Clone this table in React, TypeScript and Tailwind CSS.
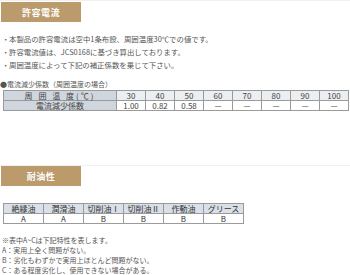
import React from 'react';

const jp = "font-['Noto_Sans_CJK_JP','Noto_Sans',sans-serif]";

// Current derating by ambient temperature
const temps = ['30', '40', '50', '60', '70', '80', '90', '100'];
const factors = ['1.00', '0.82', '0.58', '—', '—', '—', '—', '—'];

// Oil resistance grades
const oils = [
  { name: '絶縁油', grade: 'A' },
  { name: '潤滑油', grade: 'A' },
  { name: '切削油Ⅰ', grade: 'B' },
  { name: '切削油Ⅱ', grade: 'B' },
  { name: '作動油', grade: 'B' },
  { name: 'グリース', grade: 'B' },
];

const notes = [
  '本製品の許容電流は空中1条布設、周囲温度30℃での値です。',
  '許容電流値は、JCS0168に基づき算出しております。',
  '周囲温度によって下記の補正係数を乗じて下さい。',
];

const legend = [
  '※表中A~Cは下記特性を表します。',
  'A：実用上全く問題がない。',
  'B：劣化もわずかで実用上ほとんど問題がない。',
  'C：ある程度劣化し、使用できない場合がある。',
];

function SectionTab({ label }: { label: string }) {
  return (
    <div className="ml-px flex h-[20px] w-[80px] items-center justify-center bg-[#bb9a6b]">
      <span className="text-[9px] font-bold leading-none tracking-[0.5px] text-white">{label}</span>
    </div>
  );
}

const cell = 'flex h-[10px] items-center justify-center border-r border-b border-[#9a9a9a] text-[8px] leading-none';

export default function App() {
  return (
    <div className={`w-[350px] h-[275px] overflow-hidden bg-white text-[#555] ${jp}`}>
      {/* 許容電流 */}
      <section className="h-[165px] border-t border-[#f0f0f0] pt-px">
        <SectionTab label="許容電流" />
        <ul className="mt-[10px] text-[7.4px] leading-none">
          {notes.map((n) => (
            <li key={n} className="flex h-[13px] items-center">
              <span className="w-[9px] pl-[2px]">・</span>
              <span>{n}</span>
            </li>
          ))}
        </ul>
        <p className="mt-[7px] flex h-[12px] items-center text-[7px] leading-none">●電流減少係数（周囲温度の場合）</p>

        <div className="ml-[3px] grid w-[346px] grid-cols-[113px_repeat(8,29px)] border-l border-t border-[#9a9a9a] text-[#444]">
          <div className={`${cell} bg-[#cfd6dd] tracking-[2px]`}>周 囲 温 度(℃)</div>
          {temps.map((t) => (
            <div key={t} className={`${cell} bg-[#eceff2]`}>{t}</div>
          ))}
          <div className={`${cell} bg-[#cfd6dd]`}>電流減少係数</div>
          {factors.map((f, i) => (
            <div key={i} className={`${cell} bg-white`}>{f}</div>
          ))}
        </div>
      </section>

      {/* 耐油性 */}
      <section className="border-t border-[#f0f0f0]">
        <SectionTab label="耐油性" />

        <div className="ml-[3px] mt-[17px] grid w-[241px] grid-cols-[repeat(6,40px)] border-l border-t border-[#9a9a9a] text-[#333]">
          {oils.map((o) => (
            <div key={o.name} className={`${cell} bg-[#d9e0e7]`}>{o.name}</div>
          ))}
          {oils.map((o) => (
            <div key={o.name} className={`${cell} bg-white`}>{o.grade}</div>
          ))}
        </div>

        <div className="mt-[11px] pl-[2px] text-[7px] leading-none">
          {legend.map((l) => (
            <p key={l} className="flex h-[10px] items-center">{l}</p>
          ))}
        </div>
      </section>
    </div>
  );
}
